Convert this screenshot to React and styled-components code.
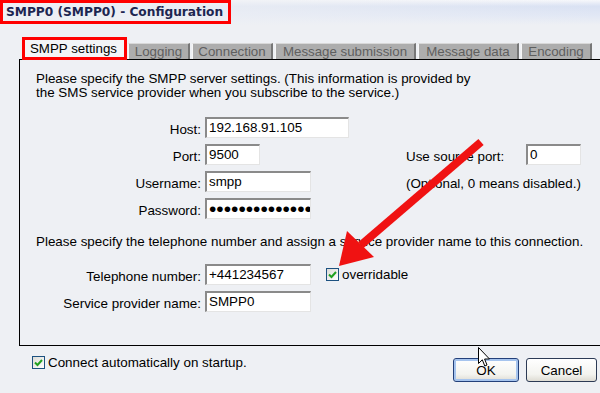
import styled, { createGlobalStyle } from "styled-components";

const GlobalStyle = createGlobalStyle`
  html, body {
    margin: 0;
    padding: 0;
  }
  body {
    background: #eef0f4;
    overflow: hidden;
    font-family: "Liberation Sans", Arial, sans-serif;
  }
`;

const Check = ({ checked = true }) => (
  <CheckBox>
    {checked && (
      <svg width="9" height="9" viewBox="0 0 9 9">
        <path d="M1 4.5 L3.5 7 L8 2" fill="none" stroke="#21a121" strokeWidth="2" />
      </svg>
    )}
  </CheckBox>
);

const App = () => {
  return (
    <Window>
      <GlobalStyle />
      <TitleBar>
        <TitleBox>SMPP0 (SMPP0) - Configuration</TitleBox>
      </TitleBar>

      <TabRow>
        <ActiveTab>SMPP settings</ActiveTab>
        <Tab $w={62}>Logging</Tab>
        <Tab $w={81}>Connection</Tab>
        <Tab $w={141}>Message submission</Tab>
        <Tab $w={101}>Message data</Tab>
        <Tab $w={71}>Encoding</Tab>
      </TabRow>

      <Panel>
        <Intro>
          Please specify the SMPP server settings. (This information is provided by
          <br />
          the SMS service provider when you subscribe to the service.)
        </Intro>

        <ServerGrid>
          <Label>Host:</Label>
          <Field $w={144}>192.168.91.105</Field>
          <span />
          <span />

          <Label>Port:</Label>
          <Field $w={55}>9500</Field>
          <Label $left>Use source port:</Label>
          <Field $w={55}>0</Field>

          <Label>Username:</Label>
          <Field $w={106}>smpp</Field>
          <Note>(Optional, 0 means disabled.)</Note>

          <Label>Password:</Label>
          <Field $w={106}>
            <Dots>••••••••••••••</Dots>
          </Field>
        </ServerGrid>

        <Intro $gap={16}>
          Please specify the telephone number and assign a service provider name to this connection.
        </Intro>

        <ProviderGrid>
          <Label>Telephone number:</Label>
          <FieldLine>
            <Field $w={106}>+441234567</Field>
            <CheckOption>
              <Check />
              overridable
            </CheckOption>
          </FieldLine>

          <Label>Service provider name:</Label>
          <Field $w={106}>SMPP0</Field>
        </ProviderGrid>
      </Panel>

      <Footer>
        <CheckOption>
          <Check />
          Connect automatically on startup.
        </CheckOption>
        <ButtonGroup>
          <Button $w={66} $default>OK</Button>
          <Button $w={71}>Cancel</Button>
        </ButtonGroup>
      </Footer>

      <Overlay width="600" height="393" viewBox="0 0 600 393">
        <line x1="481" y1="142" x2="361" y2="245" stroke="#f01212" strokeWidth="8" />
        <polygon points="339,266 347,231 374,257" fill="#f01212" />
      </Overlay>

      <Cursor width="13" height="21" viewBox="0 0 13 21">
        <path
          d="M0.5 0.5 L0.5 16.5 L4.3 12.8 L6.8 19 L9 18 L6.6 12 L11.5 12 Z"
          fill="#fff"
          stroke="#000"
          strokeWidth="1"
        />
      </Cursor>
    </Window>
  );
};

const Window = styled.div`
  position: relative;
  width: 600px;
  height: 393px;
  overflow: hidden;
  display: flex;
  flex-direction: column;
  color: #000;
`;

const TitleBar = styled.div`
  height: 25px;
  flex-shrink: 0;
  background:
    linear-gradient(to right, #eef0f4 0%, rgba(238, 240, 244, 0.6) 45%, rgba(238, 240, 244, 0) 100%),
    linear-gradient(to bottom, #f7f8fb 0%, #d9e1f3 25%, #e2e8f5 65%, #eef0f4 100%);
`;

const TitleBox = styled.div`
  display: inline-block;
  box-sizing: border-box;
  height: 24px;
  border: 3px solid #f00;
  padding: 0 5px 0 3px;
  font-family: "DejaVu Sans", Verdana, sans-serif;
  font-weight: bold;
  font-size: 12.2px;
  line-height: 18px;
  color: #1d2651;
  white-space: nowrap;
`;

const TabRow = styled.div`
  display: flex;
  align-items: flex-end;
  height: 22px;
  margin: 12px 0 0 19px;
  padding-left: 3px;
  border-bottom: 1px solid #000;
`;

const ActiveTab = styled.div`
  position: relative;
  z-index: 1;
  box-sizing: border-box;
  width: 105px;
  height: 23px;
  margin-bottom: -1px;
  padding-left: 5px;
  border: 3px solid #f00;
  background: #f3f4f7;
  font-size: 13.3px;
  line-height: 17px;
  white-space: nowrap;
`;

const Tab = styled.div`
  box-sizing: border-box;
  width: ${(p) => p.$w}px;
  height: 16px;
  margin-left: 2px;
  border-top: 1px solid #d8d8d8;
  border-left: 1px solid #f6f6f6;
  border-right: 2px solid #777;
  background: #adadad;
  color: #5f5f5f;
  font-size: 13.3px;
  line-height: 15px;
  text-align: center;
  white-space: nowrap;

  &:nth-child(2) {
    margin-left: 1px;
  }
`;

const Panel = styled.div`
  box-sizing: border-box;
  height: 286px;
  margin: 0 -30px 0 19px;
  padding: 12px 0 0 16px;
  border-left: 1px solid #000;
  border-bottom: 1px solid #000;
  flex-shrink: 0;
`;

const Intro = styled.p`
  margin: ${(p) => p.$gap || 0}px 0 0;
  font-size: 13.4px;
  line-height: 14px;
  white-space: nowrap;
`;

const ServerGrid = styled.div`
  display: grid;
  grid-template-columns: 165px 197px 116px 55px;
  grid-auto-rows: 21px;
  column-gap: 4px;
  row-gap: 6px;
  margin-top: 17px;
`;

const ProviderGrid = styled.div`
  display: grid;
  grid-template-columns: 165px auto;
  grid-auto-rows: 21px;
  column-gap: 4px;
  row-gap: 6px;
  margin-top: 15px;
`;

const Label = styled.div`
  display: flex;
  align-items: flex-end;
  justify-content: ${(p) => (p.$left ? "flex-start" : "flex-end")};
  padding-bottom: 1px;
  font-size: 13.4px;
  line-height: 15px;
  white-space: nowrap;
`;

const Note = styled.div`
  grid-column: 3 / 5;
  align-self: end;
  padding-bottom: 1px;
  font-size: 13.4px;
  line-height: 15px;
  white-space: nowrap;
`;

const Field = styled.div`
  box-sizing: border-box;
  width: ${(p) => p.$w}px;
  height: 21px;
  padding-left: 2px;
  border-style: solid;
  border-width: 2px 1px 1px 2px;
  border-color: #8a8a8a #e4e4e4 #e4e4e4 #8a8a8a;
  background: #fff;
  font-size: 13.4px;
  line-height: 17px;
  white-space: nowrap;
  overflow: hidden;
`;

const Dots = styled.span`
  font-size: 21px;
  letter-spacing: 0px;
  line-height: 17px;
`;

const FieldLine = styled.div`
  display: flex;
  align-items: center;
  gap: 15px;
`;

const CheckOption = styled.label`
  display: inline-flex;
  align-items: center;
  gap: 3px;
  font-size: 13.4px;
  line-height: 15px;
  white-space: nowrap;
`;

const CheckBox = styled.span`
  box-sizing: border-box;
  width: 13px;
  height: 13px;
  display: inline-flex;
  align-items: center;
  justify-content: center;
  border: 1px solid #1c5180;
  background: linear-gradient(135deg, #dcdcd7 0%, #ffffff 100%);
`;

const Footer = styled.div`
  display: flex;
  align-items: flex-start;
  padding: 9px 3px 0 32px;
`;

const ButtonGroup = styled.div`
  display: flex;
  gap: 7px;
  margin-left: auto;
  margin-top: 3px;
`;

const Button = styled.button`
  box-sizing: border-box;
  width: ${(p) => p.$w}px;
  height: 24px;
  padding: 0;
  border: 1px solid ${(p) => (p.$default ? "#23407a" : "#2c3a55")};
  border-radius: 3px;
  background: linear-gradient(to bottom, #ffffff 0%, #f3f3ef 70%, #dedcd3 100%);
  box-shadow: ${(p) => (p.$default ? "inset 0 0 0 2px #a6c4ee" : "none")};
  font-family: "Liberation Sans", Arial, sans-serif;
  font-size: 13.4px;
  color: #000;
`;

const Overlay = styled.svg`
  position: absolute;
  top: 0;
  left: 0;
  pointer-events: none;
`;

const Cursor = styled.svg`
  position: absolute;
  left: 478px;
  top: 347px;
  pointer-events: none;
`;

export default App;
